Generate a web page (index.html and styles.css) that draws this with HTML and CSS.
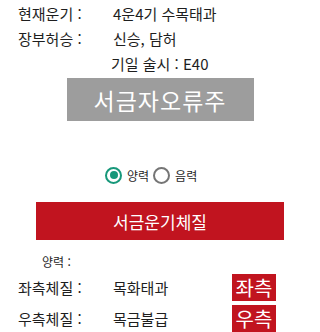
FILE: index.html
```html
<!DOCTYPE html>
<html lang="ko">
<head>
<meta charset="utf-8" />
<title>서금운기체질</title>
<link rel="stylesheet" href="styles.css">
</head>
<body>
<div class="info">
	<div class="row"><span class="label">현재운기 :</span><span>4운4기 수목태과</span></div>
	<div class="row"><span class="label">장부허승 :</span><span>신승, 담허</span></div>
	<div class="row date">기일 술시 : E40</div>
</div>
<div class="solar-btn">서금자오류주</div>
<div class="radios">
	<span class="radio checked"></span><span class="radio-text">양력</span>
	<span class="radio"></span><span class="radio-text">음력</span>
</div>
<div class="main-btn">서금운기체질</div>
<div class="calendar">양력 :</div>
<div class="result">
	<span class="label">좌측체질 :</span><span class="value">목화태과</span><span class="side">좌측</span>
</div>
<div class="result">
	<span class="label">우측체질 :</span><span class="value">목금불급</span><span class="side">우측</span>
</div>
</body>
</html>
```

FILE: styles.css
```css
body {
	margin: 0;
	width: 320px;
	font-family: "Noto Sans CJK KR", "Noto Sans", sans-serif;
	color: #1e1e1e;
	background: #fff;
}

.info {
	padding: 1px 0 0 18px;
}

.row {
	display: flex;
	align-items: center;
	height: 25px;
	font-size: 15px;
}

.label {
	width: 95px;
	flex: none;
}

.row.date {
	padding-left: 93px;
}

.solar-btn {
	width: 187px;
	height: 43px;
	margin: 2px auto 0;
	background: #9d9d9d;
	color: #fff;
	font-size: 23px;
	letter-spacing: 1px;
	display: flex;
	align-items: center;
	justify-content: center;
}

.radios {
	display: flex;
	align-items: center;
	height: 20px;
	margin: 44px 0 0 105px;
	font-size: 12px;
}

.radio {
	width: 13px;
	height: 13px;
	border: 2px solid #757575;
	border-radius: 50%;
	display: flex;
	align-items: center;
	justify-content: center;
}

.radio.checked {
	border-color: #17987a;
}

.radio.checked::after {
	content: "";
	width: 8px;
	height: 8px;
	border-radius: 50%;
	background: #17987a;
}

.radio-text {
	margin: 0 4px 0 4px;
}

.radio + .radio-text {
	margin-left: 5px;
}

.main-btn {
	width: 248px;
	height: 38px;
	margin: 17px auto 0;
	background: #c1141f;
	color: #fff;
	font-size: 17px;
	display: flex;
	align-items: center;
	justify-content: center;
}

.calendar {
	margin-top: 14px;
	padding-left: 42px;
	font-size: 12px;
	line-height: 16px;
}

.result {
	display: flex;
	align-items: center;
	height: 27px;
	margin-top: 4px;
	padding-left: 18px;
	font-size: 15px;
}

.result .value {
	width: 119px;
}

.side {
	width: 44px;
	height: 27px;
	background: #c1141f;
	color: #fff;
	font-size: 20px;
	line-height: 27px;
	text-align: center;
}
```
